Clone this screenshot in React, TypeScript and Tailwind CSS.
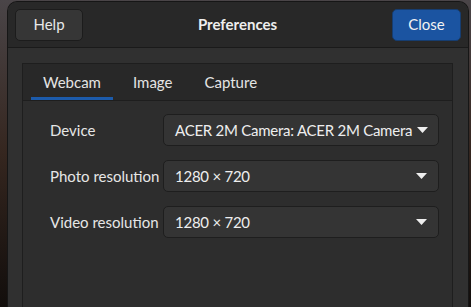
const rows = [
  { label: 'Device', value: 'ACER 2M Camera: ACER 2M Camera' },
  { label: 'Photo resolution', value: '1280 × 720' },
  { label: 'Video resolution', value: '1280 × 720' },
]

const tabs = ['Webcam', 'Image', 'Capture']

function Arrow() {
  return (
    <svg width="11" height="6" viewBox="0 0 11 6" className="shrink-0">
      <path d="M0 0 L11 0 L5.5 6 Z" fill="#eeeeee" />
    </svg>
  )
}

export default function App() {
  return (
    <div
      className="h-[307px] w-[471px] overflow-hidden bg-gradient-to-b from-[#4a4548] via-[#35261f] to-[#120e0c] pl-[8px] pt-[2px]"
      style={{ fontFamily: 'Lato, "Noto Sans", sans-serif' }}
    >
      <div className="flex h-[320px] w-[460px] flex-col rounded-t-[9px] bg-[#303030] ring-1 ring-[#161616]">
        {/* Header bar */}
        <div className="flex h-[46px] items-center justify-between rounded-t-[9px] border-b border-[#1a1a1a] bg-[#282828] px-[7px]">
          <button className="h-[32px] w-[68px] rounded-[5px] border border-[#1c1c1c] bg-[#363636] text-[15px] text-[#e8e8e8]">
            Help
          </button>
          <span className="text-[15px] font-bold text-[#eeeeee]">Preferences</span>
          <button className="h-[32px] w-[69px] rounded-[5px] border border-[#163d70] bg-[#1b54a1] text-[15px] text-[#f2f2f2]">
            Close
          </button>
        </div>

        {/* Notebook */}
        <div className="ml-[14px] mt-[15px] flex w-[431px] flex-1 flex-col border border-[#1e1e1e] bg-[#2d2d2d]">
          <div className="flex h-[37px] gap-[8px] border-b border-[#1e1e1e] bg-[#282828] pl-[8px]">
            {tabs.map((t, i) => (
              <div key={t} className="relative flex items-center px-[12px] text-[15px] text-[#e4e4e4]">
                <span className="mt-[1px]">{t}</span>
                {i === 0 && (
                  <div className="absolute bottom-0 left-0 right-0 h-[3px] bg-[#1c5bab]" />
                )}
              </div>
            ))}
          </div>

          <div className="flex flex-col gap-[14px] pl-[27px] pr-[13px] pt-[13px]">
            {rows.map((r) => (
              <div key={r.label} className="flex items-center">
                <span className="w-[113px] shrink-0 whitespace-nowrap text-[15px] text-[#e6e6e6]">{r.label}</span>
                <div className="flex h-[32px] min-w-0 flex-1 items-center justify-between gap-[5px] rounded-[5px] border border-[#1e1e1e] bg-[#343434] pl-[11px] pr-[11px] text-[15px] text-[#eeeeee]">
                  <span className="whitespace-nowrap tracking-[-0.25px]">{r.value}</span>
                  <Arrow />
                </div>
              </div>
            ))}
          </div>
        </div>
      </div>
    </div>
  )
}
